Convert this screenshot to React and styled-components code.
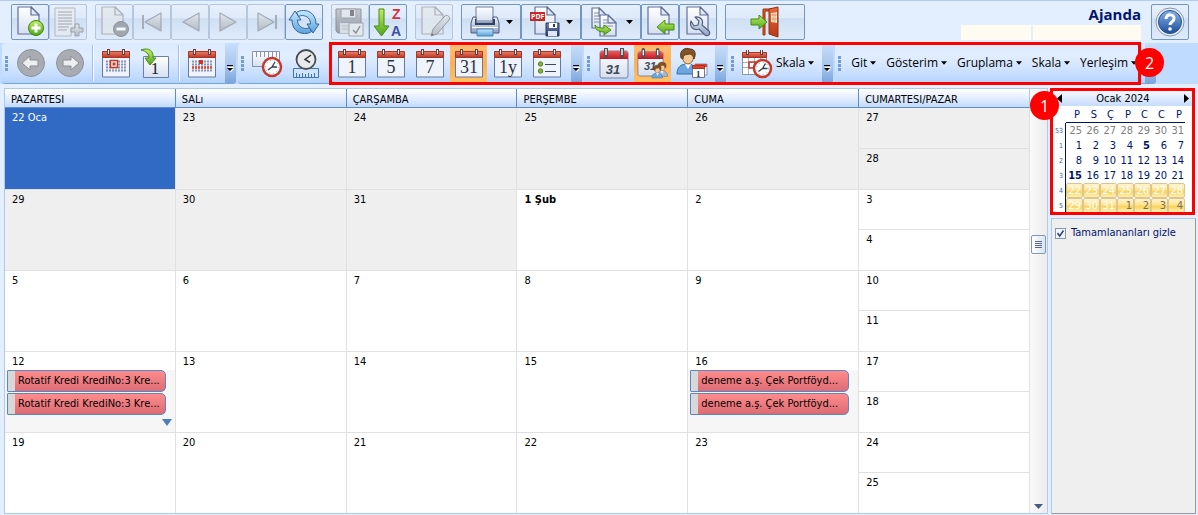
import React from 'react';
import styled, { createGlobalStyle, css } from 'styled-components';

const GlobalStyle = createGlobalStyle`
  * {
    box-sizing: border-box;
  }

  body {
    margin: 0;
    background: #e3eeff;
    font-family: 'DejaVu Sans Condensed', 'Noto Sans', sans-serif;
    font-size: 11px;
    line-height: 14px;
    color: #000;
  }

  button {
    font: inherit;
    color: inherit;
    padding: 0;
    border: none;
    background: none;
  }
`;

const Page = styled.div`
  display: flex;
  flex-direction: column;
  min-height: 100vh;
  border-top: 1px solid #b3cdee;
`;

const MainToolbar = styled.header`
  display: flex;
  align-items: flex-start;
  justify-content: space-between;
  height: 42px;
  padding: 3px 9px 0 11px;
`;

const Groups = styled.div`
  display: flex;
  gap: 8px;
`;

const Group = styled.div`
  display: flex;
`;

const ToolButton = styled.button`
  display: flex;
  align-items: center;
  justify-content: center;
  gap: 5px;
  width: ${({ $wide }) => $wide || 38}px;
  height: 36px;
  border: 1px solid ${({ disabled }) => (disabled ? '#b5c7dd' : '#7496c2')};
  border-radius: 2px;
  background: linear-gradient(#e6effb 0%, #dfeafa 38%, #cfdff3 40%, #deebfb 100%);

  svg {
    flex: none;
  }

  > svg:first-child {
    opacity: ${({ disabled }) => (disabled ? 0.75 : 1)};
  }
`;

const TitleArea = styled.div`
  display: flex;
  gap: 10px;
`;

const TitleBlock = styled.div`
  display: flex;
  flex-direction: column;
  align-items: flex-end;
`;

const Title = styled.h1`
  margin: 0;
  height: 21px;
  font-family: 'Open Sans', sans-serif;
  font-size: 15px;
  font-weight: 700;
  line-height: 21px;
  color: #00146e;
`;

const Fields = styled.div`
  display: flex;
  gap: 2px;
`;

const Field = styled.span`
  width: ${({ $width }) => $width}px;
  height: 15px;
  background: #fffbf0;
`;

const BandBar = styled.nav`
  position: relative;
  display: flex;
  gap: 2px;
  height: 41px;
  padding-left: 2px;
  background: #bfdbff;
`;

const Band = styled.div`
  display: flex;
  align-items: center;
  height: 41px;
  border-bottom: 1px solid #7ba5de;
  border-radius: 3px;
  background: linear-gradient(#dceaff, #e1edff 35%, #c5ddff 80%, #b5d2fb);
  overflow: hidden;
`;

const BandItems = styled.div`
  display: flex;
  align-items: center;
  gap: ${({ $gap }) => $gap || 0}px;
  padding: 0 ${({ $end }) => $end || 0}px 0 ${({ $start }) => $start || 0}px;
`;

const Grip = styled.span`
  width: 3px;
  height: 15px;
  margin-left: 3px;
  background: repeating-linear-gradient(#6f9ddb 0 3px, transparent 3px 4px);
`;

const Cap = styled.button`
  display: flex;
  align-items: flex-end;
  justify-content: center;
  width: 11px;
  height: 41px;
  padding-bottom: 12px;
  background: linear-gradient(#c9dffc, #a3c2ec 60%, #79a3dc);
`;

const IconButton = styled.button`
  display: flex;
  align-items: center;
  justify-content: center;
  width: 37px;
  height: 37px;
  ${({ $active }) =>
    $active &&
    css`
      background: linear-gradient(#fdbd75, #ffb052 50%, #ffc167);
    `}
`;

const Divider = styled.span`
  width: 2px;
  height: 36px;
  border-left: 1px solid #9cbfee;
  border-right: 1px solid #fff;
`;

const MenuButton = styled.button`
  display: flex;
  align-items: center;
  gap: 3px;
  height: 36px;
  font-family: 'Open Sans', sans-serif;
  font-size: 12px;
`;

const Outline = styled.div`
  position: absolute;
  border: 3px solid #f00;
  pointer-events: none;
`;

const ToolbarOutline = styled(Outline)`
  top: -1px;
  left: 329px;
  width: 812px;
  height: 43px;
`;

const PanelOutline = styled(Outline)`
  inset: 0 1px -1px -1px;
`;

const Badge = styled.span`
  position: absolute;
  display: flex;
  align-items: center;
  justify-content: center;
  width: 29px;
  height: 29px;
  border-radius: 50%;
  background: #f00;
  color: #fff;
  font-family: 'Open Sans', sans-serif;
  font-size: 16px;
`;

const ToolbarBadge = styled(Badge)`
  top: 5px;
  left: 1135px;
`;

const PanelBadge = styled(Badge)`
  top: 3px;
  left: -21px;
`;

const Workspace = styled.main`
  display: flex;
  flex: 1;
  gap: 3px;
  padding: 4px 2px 1px 4px;
`;

const Planner = styled.section`
  display: flex;
  flex: 1;
  min-width: 0;
  border: 1px solid #b1c9e8;
  background: #fff;
`;

const MonthTable = styled.table`
  flex: 1;
  min-width: 0;
  width: 100%;
  table-layout: fixed;
  border-collapse: separate;
  border-spacing: 0;
`;

const DayHead = styled.th`
  height: 19px;
  padding: 3px 6px 0;
  border-bottom: 1px solid #5f8bc9;
  border-right: 1px solid #5f8bc9;
  background: linear-gradient(#fff, #e6f0ff 45%, #c2dbff);
  font-weight: 400;
  text-align: left;
  white-space: nowrap;

  &:last-child {
    border-right-color: #b1c9e8;
  }
`;

const tones = {
  other: css`
    background: #efefef;
  `,
  selected: css`
    background: #316ac5;
    color: #fff;
  `,
  busy: css`
    background: linear-gradient(#fff 18px, #f6f6f6 18px);
  `,
};

const DayCell = styled.td`
  height: ${({ $height }) => $height}px;
  padding: 2px 9px 0 2px;
  border-right: 1px solid #e0e0e0;
  border-bottom: ${({ $last }) => ($last ? 0 : '1px solid #e0e0e0')};
  vertical-align: top;
  font-weight: ${({ $bold }) => ($bold ? 700 : 400)};
  ${({ $tone }) => tones[$tone]}
`;

const DayNumber = styled.div`
  padding-left: 5px;
  height: 16px;
  line-height: 16px;
`;

const Event = styled.div`
  height: 22px;
  margin-bottom: 1px;
  padding: 0 3px;
  border: 1px solid #5a86c4;
  border-radius: 1px 5px 5px 1px;
  background: linear-gradient(90deg, #d8d8d8 7px, transparent 7px), linear-gradient(#ff8c8c, #dc6c74);
  line-height: 20px;
  text-indent: 7px;
  white-space: nowrap;
  overflow: hidden;
`;

const MoreButton = styled.button`
  display: flex;
  justify-content: flex-end;
  margin: 4px -6px 0 auto;
  width: 14px;
  height: 8px;
`;

const ScrollBar = styled.div`
  display: flex;
  flex-direction: column;
  align-items: center;
  justify-content: flex-end;
  width: 17px;
  padding-bottom: 4px;
  background: linear-gradient(90deg, #fafafa, #ececec);
`;

const Thumb = styled.span`
  display: flex;
  align-items: center;
  justify-content: center;
  width: 15px;
  height: 19px;
  margin-bottom: auto;
  margin-top: 146px;
  border: 1px solid #7f97b8;
  border-radius: 2px;
  background: linear-gradient(90deg, #fff, #dce4ee);
`;

const Side = styled.aside`
  display: flex;
  flex-direction: column;
  gap: 4px;
  width: 145px;
`;

const DatePanel = styled.section`
  position: relative;
  height: 126px;
  padding: 3px 4px 0 3px;
  background: #fff;
`;

const MonthBar = styled.div`
  display: flex;
  align-items: center;
  justify-content: space-between;
  height: 15px;
  padding: 0 3px;
  background: linear-gradient(#f5f9ff, #c6dcfb);
`;

const NavButton = styled.button`
  display: flex;
`;

const MiniTable = styled.table`
  width: 131px;
  margin-top: 2px;
  border-spacing: 0;
  table-layout: fixed;
  color: #00146e;

  th,
  td {
    height: 15px;
    padding: 1px 1px 0 0;
    font-weight: 400;
    line-height: 14px;
    text-align: right;
  }

  thead th {
    padding-top: 0;
    padding-right: 3px;
    border-bottom: 1px solid #00146e;
  }

  tr > :first-child {
    width: 12px;
    padding-right: 2px;
    border-bottom: 0;
    border-right: 1px solid #00146e;
    font-size: 7px;
    color: #3a5f9d;
  }

  thead tr > :first-child {
    border-right-color: transparent;
  }
`;

const MiniDay = styled.td`
  && {
    font-weight: ${({ $bold }) => ($bold ? 700 : 400)};
    color: ${({ $tone }) => ({ muted: '#808080', picked: '#fff', pickedNext: '#77715c' })[$tone]};
    ${({ $tone }) =>
      $tone &&
      $tone !== 'muted' &&
      css`
        padding-top: 0;
        border: 1px solid #dcc590;
        border-radius: 2px;
        background: linear-gradient(#fff4cf, #ffe695 40%, #f8d35c 60%, #fff0b8);
        line-height: 13px;
      `}
  }
`;

const TaskPanel = styled.section`
  flex: 1;
  padding: 7px 3px;
  border: 1px solid #b1c9e8;
  border-right-color: #9a9a9a;
  border-bottom-color: #9a9a9a;
  background: #efefef;
`;

const CheckLabel = styled.label`
  display: flex;
  align-items: center;
  gap: 5px;
  color: #00146e;
  white-space: nowrap;
`;

const CheckBox = styled.input`
  appearance: none;
  width: 11px;
  height: 11px;
  margin: 0;
  border: 1px solid #8098b8;
  background: #f4f6fa
    url("data:image/svg+xml,%3Csvg xmlns='http://www.w3.org/2000/svg' viewBox='0 0 9 9'%3E%3Cpath d='M1.5 4l2.2 3L7.5 1.5' fill='none' stroke='%2335507f' stroke-width='1.7'/%3E%3C/svg%3E")
    center / 9px 9px no-repeat;
`;

/* Icons */

const Svg = ({ w = 32, h = 32, children }) => (
  <svg width={w} height={h} viewBox={`0 0 ${w} ${h}`} aria-hidden="true">
    {children}
  </svg>
);

const HiddenSvg = styled.svg`
  position: absolute;
`;

const Gradients = () => (
  <HiddenSvg width="0" height="0" aria-hidden="true">
    <defs>
      {[
        ['paper', '#ffffff', '#d5dff0'],
        ['gray', '#e6e8eb', '#a9adb3'],
        ['grayDark', '#b9bcc0', '#85898e'],
        ['green', '#c3ee62', '#4fa51c'],
        ['red', '#ee8066', '#bb3524'],
        ['crimson', '#ef5a5a', '#c01722'],
        ['blue', '#c6e8fb', '#5aa3dc'],
        ['deep', '#86b2e8', '#1c4d9c'],
        ['navy', '#7484b4', '#28386f'],
        ['orange', '#e8683c', '#b93a18'],
        ['steel', '#f1f5fb', '#8e9fc0'],
      ].map(([id, from, to]) => (
        <linearGradient key={id} id={id} x1="0" y1="0" x2="0" y2="1">
          <stop offset="0" stopColor={from} />
          <stop offset="1" stopColor={to} />
        </linearGradient>
      ))}
    </defs>
  </HiddenSvg>
);

const Caret = ({ w = 7 }) => (
  <svg width={w} height="4" viewBox="0 0 7 4" aria-hidden="true">
    <path d="M0 0h7L3.5 4z" fill="#000" />
  </svg>
);

const Sheet = ({ x = 4, y = 1, w = 21, h = 27, gray }) => (
  <g
    fill={gray ? '#e4e7ec' : 'url(#paper)'}
    stroke={gray ? '#9a9fa7' : '#5f719b'}
    strokeWidth="1.2"
    strokeLinejoin="round"
  >
    <path d={`M${x} ${y}h${w - 8}l8 8v${h - 8}h-${w}z`} />
    <path d={`M${x + w - 8} ${y}v8h8z`} />
  </g>
);

const NewIcon = () => (
  <Svg>
    <Sheet />
    <circle cx="22" cy="22" r="7.5" fill="url(#green)" stroke="#3c8511" />
    <path d="M22 17.5v9M17.5 22h9" stroke="#fff" strokeWidth="3" />
  </Svg>
);

const AddLinesIcon = () => (
  <Svg>
    <path d="M3 2h20v20h-4v8H3z" fill="#e8ebef" stroke="#a5aab2" />
    <path d="M6 6h14M6 9h14M6 12h14M6 15h14M6 18h14M6 21h11M6 24h9" stroke="#8f949b" />
    <path d="M23 18h4v4h4v4h-4v4h-4v-4h-4v-4h4z" fill="url(#gray)" stroke="#858a91" />
  </Svg>
);

const DeleteIcon = () => (
  <Svg>
    <Sheet gray />
    <circle cx="23" cy="23" r="7.5" fill="#8e9196" stroke="#75787d" />
    <path d="M18.5 23h9" stroke="#fff" strokeWidth="3" />
  </Svg>
);

const NavIcon = ({ back, bar }) => {
  const tri = back ? 'M25 7v18L9 16z' : 'M8 7v18l16-9z';
  return (
    <Svg>
      <path d={tri} fill="url(#gray)" stroke="#8f959e" strokeWidth="1.2" strokeLinejoin="round" />
      {bar && <path d={back ? 'M7 9v14' : 'M26 9v14'} stroke="#969ca5" strokeWidth="2" />}
    </Svg>
  );
};

const RefreshIcon = () => (
  <Svg>
    <g fill="url(#blue)" stroke="#33669f" strokeLinejoin="round">
      <path d="M7 5 13 14H9.5c0 5 3 8 8 8.500 1.500 0 3-.5 4-1l2 4c-2 1.500-4 2-7 2C9 27.500 4 22 4 14H1z" />
      <path d="M25 27 19 18h3.500c0-5-3-8-8-8.500-1.500 0-3 .5-4 1l-2-4c2-1.500 4-2 7-2C23 4.500 28 10 28 18h3z" />
    </g>
  </Svg>
);

const SaveIcon = () => (
  <Svg>
    <path d="M2 3h25v24H4l-2-2z" fill="url(#grayDark)" stroke="#777b80" />
    <path d="M7 3h15v9H7z" fill="#e3e5e8" stroke="#8a8d92" />
    <path d="M16 4h4v6h-4z" fill="#5f6368" />
    <path d="M6 17h17v10H6z" fill="#d8dadd" />
    <path d="M8 20h10M8 23h8" stroke="#aeb1b6" />
    <path d="M15 17h14v13H15z" fill="#e9ebee" stroke="#8c9096" />
    <path d="m19 24 3 3 4-7" fill="none" stroke="#777" strokeWidth="1.5" />
  </Svg>
);

const SortIcon = () => (
  <Svg>
    <path d="M7 3h5v17h5l-7.500 10L2 20h5z" fill="url(#green)" stroke="#478b17" strokeLinejoin="round" />
    <g fontFamily="Liberation Sans, sans-serif" fontWeight="700" fontSize="14">
      <text x="20" y="13" fill="#d3313c">Z</text>
      <text x="19" y="30" fill="#3c51a0">A</text>
    </g>
  </Svg>
);

const EditIcon = () => (
  <Svg>
    <Sheet x={4} gray />
    <path d="m13 30 2-7 12-13c2-2 6 1 4 4L19 28z" fill="url(#gray)" stroke="#7e838a" strokeLinejoin="round" />
    <path d="m13 30 1-3 2 2z" fill="#555" />
  </Svg>
);

const PrintIcon = () => (
  <Svg>
    <path d="M7 1h17v14H7z" fill="url(#paper)" stroke="#6d7c9f" />
    <path d="M4 11h3v6h17v-6h4l2 6v10H2V17z" fill="url(#steel)" stroke="#4c5c85" strokeLinejoin="round" />
    <path d="M6 13h1v4h17v-4h2v6H6z" fill="#334165" />
    <path d="M3 21.500h26" stroke="#fff" />
    <path d="M8 23h16v7H8z" fill="url(#blue)" stroke="#4d83b9" />
  </Svg>
);

const PdfIcon = () => (
  <Svg>
    <Sheet x={6} w={20} />
    <path d="M1 6h15v9H1z" fill="#c82629" />
    <text x="2" y="13" fill="#fff" fontFamily="Open Sans, sans-serif" fontWeight="700" fontSize="7">PDF</text>
    <path d="M17 17h13v13H17z" fill="url(#navy)" stroke="#273764" />
    <path d="M20 17h8v5h-8z" fill="#fff" />
    <path d="M19 25h9v5h-9z" fill="#dfe7f6" />
    <path d="M24 18h2v3h-2z" fill="#273764" />
  </Svg>
);

const CopyIcon = () => (
  <Svg>
    <Sheet x={3} y={2} w={15} h={20} />
    <path d="M5 7h5M5 10h8M5 13h8M5 16h8" stroke="#8190b3" />
    <Sheet x={11} y={9} w={16} h={21} />
    <path d="M14 14h5M14 17h10M14 20h10" stroke="#8190b3" />
    <path d="M6 19c2 3 5 3 9 3v-3l7 5-7 5v-3c-6 0-9-3-9-7z" fill="url(#green)" stroke="#478b17" strokeLinejoin="round" />
  </Svg>
);

const ImportIcon = () => (
  <Svg>
    <Sheet x={4} w={21} />
    <path d="m13 21 8-7v4h9v6h-9v4z" fill="url(#green)" stroke="#478b17" strokeLinejoin="round" />
  </Svg>
);

const ToolsIcon = () => (
  <Svg>
    <Sheet x={5} w={21} />
    <path
      d="M9 15c-2 6 3 10 8 8l6 6c3 2 6-1 4-4l-7-6c2-5-2-9-7-8l4 4-1 4-4 1z"
      fill="url(#steel)"
      stroke="#506084"
      strokeWidth="1.2"
      strokeLinejoin="round"
    />
  </Svg>
);

const DoorIcon = () => (
  <Svg>
    <path d="M14 3v26h2V5h6V3z" fill="#d9552a" stroke="#a03413" />
    <path d="m20 3 9-2v30l-9-3z" fill="url(#orange)" stroke="#94300f" strokeLinejoin="round" />
    <path d="m22 7 6-1v11l-6-1z" fill="#fff2cf" />
    <path d="M24 6v11M26 6v11M22 9h6M22 13h6" stroke="#cf6a3a" strokeWidth="0.6" />
    <path d="M2 13h8V9l8 7-8 7v-4H2z" fill="url(#green)" stroke="#478b17" strokeLinejoin="round" />
  </Svg>
);

const HelpIcon = () => (
  <Svg>
    <circle cx="16" cy="16" r="14" fill="#e9eef7" stroke="#8495b3" />
    <circle cx="16" cy="16" r="11.5" fill="url(#deep)" stroke="#27528f" />
    <path d="M12 13c0-6 9-5 8 0-.5 3-4 3-4 6" fill="none" stroke="#fff" strokeWidth="3" />
    <circle cx="16" cy="23" r="1.8" fill="#fff" />
  </Svg>
);

const ArrowCircle = ({ back }) => (
  <Svg w={30} h={30}>
    <circle cx="15" cy="15" r="13.5" fill="#a9adb3" stroke="#8d9299" />
    <path
      d={back ? 'm6 15 8-7v4h8v6h-8v4z' : 'm24 15-8-7v4H8v6h8v4z'}
      fill="#eceef0"
      stroke="#878c93"
      strokeLinejoin="round"
    />
  </Svg>
);

const CalendarBase = () => (
  <g>
    <path d="M1.5 4h27v25h-27z" fill="#eff3fb" stroke="#67799f" />
    <path d="M1.5 3.5h27v6h-27z" fill="url(#red)" stroke="#a93625" />
    <path d="M7.500 1v6M22.500 1v6" stroke="#653d3d" strokeWidth="3" />
    <path d="M7.500 2v4M22.500 2v4" stroke="#f6eaea" />
  </g>
);

const NumberCalendar = ({ label }) => (
  <Svg w={30} h={31}>
    <CalendarBase />
    <text x="15" y="25" textAnchor="middle" fill="#2c3340" fontFamily="Liberation Serif, serif" fontSize="18">
      {label}
    </text>
  </Svg>
);

const RedCalendarBase = () => (
  <g>
    <rect x="1" y="3" width="28" height="27" rx="2" fill="url(#paper)" stroke="#7a8193" />
    <path d="M1 11V5l2-2h24l2 2v6z" fill="url(#crimson)" />
    <path d="M7 1v7M23 1v7" stroke="#55504f" strokeWidth="4" strokeLinecap="round" />
    <path d="M7 1v6M23 1v6" stroke="#f3f3f3" strokeWidth="1.5" />
  </g>
);

const DateCalendar = () => (
  <Svg w={30} h={31}>
    <RedCalendarBase />
    <text
      x="14"
      y="26"
      textAnchor="middle"
      fill="#444a55"
      fontFamily="Liberation Sans, sans-serif"
      fontSize="13"
      fontWeight="700"
      fontStyle="italic"
    >
      31
    </text>
  </Svg>
);

const ListCalendar = () => (
  <Svg w={30} h={31}>
    <CalendarBase />
    <circle cx="8.5" cy="16" r="2.2" fill="#84b83a" stroke="#587f22" />
    <circle cx="8.5" cy="23" r="2.2" fill="#84b83a" stroke="#587f22" />
    <path d="M13 16.500h11M13 23.500h11" stroke="#414959" />
  </Svg>
);

const GridCalendar = ({ week }) => (
  <Svg w={30} h={31}>
    <CalendarBase />
    <path d="M5 13.500h20M5 16.500h20M5 19.500h20M5 22.500h20" stroke="#8594b6" strokeWidth="2" strokeDasharray="2 1" />
    {week ? (
      <g>
        <path d="M5 19.500h20" stroke="#e04b32" strokeWidth="2.5" strokeDasharray="2 1" />
        <path d="M12 12h4v4h-4z" fill="#d23322" />
      </g>
    ) : (
      <g>
        <path d="M9.500 12.500h7v7h-7z" fill="#fff" stroke="#d23322" strokeWidth="1.5" />
        <path d="M11.500 14.500h3v3h-3z" fill="#d23322" />
      </g>
    )}
  </Svg>
);

const GotoIcon = () => (
  <Svg w={30} h={31}>
    <path d="M3.500 8.500h25v21h-25z" fill="url(#paper)" stroke="#6b7ea8" />
    <text x="15" y="26" textAnchor="middle" fontFamily="Liberation Serif, serif" fontSize="17" fill="#222">1</text>
    <path d="M1 2c8-3 13 1 12 8h3l-6 7-5-7h4c0-4-3-7-8-8z" fill="url(#green)" stroke="#478b17" strokeLinejoin="round" />
  </Svg>
);

const Clock = ({ cx, cy, r, color = '#c6382b' }) => (
  <g>
    <circle cx={cx} cy={cy} r={r} fill="#fff" stroke={color} strokeWidth="2.5" />
    <circle cx={cx} cy={cy} r={r - 2.5} fill="none" stroke="#8b98ae" strokeDasharray="1 3" />
    <path d={`M${cx - 4} ${cy + 3}l4-3 3-5M${cx} ${cy}h5`} fill="none" stroke="#333c50" strokeWidth="1.3" />
  </g>
);

const RulerClock = () => (
  <Svg w={32} h={31}>
    <path d="M1.500 3.500h27v15h-27z" fill="url(#paper)" stroke="#8793ad" />
    <path d="M5.500 4v5M9.500 4v5M13.500 4v5M17.500 4v5M21.500 4v5M25.500 4v5" stroke="#8793ad" />
    <Clock cx={21} cy={19} r={9} />
  </Svg>
);

const ClockRuler = () => (
  <Svg w={30} h={31}>
    <path d="M2.500 20.500h25v9h-25z" fill="#cfe3fb" stroke="#4173b7" />
    <path d="M5.500 29v-4M8.500 29v-3M11.500 29v-4M14.500 29v-3M17.500 29v-4M20.500 29v-3M23.500 29v-4" stroke="#4173b7" />
    <circle cx="15" cy="11.5" r="9.5" fill="#e8eaed" stroke="#4a4d52" strokeWidth="1.8" />
    <path d="m20 7-6 4.500 5 3" fill="none" stroke="#333" strokeWidth="1.5" />
  </Svg>
);

const CalendarClock = () => (
  <Svg w={32} h={31}>
    <path d="M1.500 4.500h24v22h-24z" fill="#fff" stroke="#8d95ab" />
    <path d="M2 14.500h23M2 19.500h23M7.500 10v16M13.500 10v16M19.500 10v16" stroke="#a8b0c4" />
    <path d="M1.500 4.500h24v5h-24z" fill="url(#red)" stroke="#a93625" />
    <path d="M6.500 2v5M20.500 2v5" stroke="#653d3d" strokeWidth="3" />
    <path d="M6.500 2v4M20.500 2v4" stroke="#f6eaea" />
    <path d="M8 14h6v6H8z" fill="none" stroke="#d23322" strokeWidth="1.5" />
    <Clock cx={21.5} cy={20.5} r={8.5} />
  </Svg>
);

const Person = ({ x, y, s, shirt = '#6da7e0' }) => (
  <g transform={`translate(${x} ${y}) scale(${s})`}>
    <path d="M0 26c0-7 4-10 10-10s11 3 11 10z" fill={shirt} stroke="#396ca9" />
    <path d="m8 16 3 5 3-5z" fill="#fff" />
    <ellipse cx="11" cy="9" rx="5.5" ry="7" fill="#f3c997" stroke="#96632e" />
    <path d="M4 10C2 2 8-1 13 1c6 0 6 6 4 10-1-4-3-5-5-5-3 1-6 0-6 5z" fill="#80532a" stroke="#5d3917" />
  </g>
);

const PeopleCalendar = () => (
  <Svg w={32} h={31}>
    <g transform="translate(0 1) scale(0.9)">
      <RedCalendarBase />
    </g>
    <text x="13" y="22" textAnchor="middle" fontFamily="Liberation Sans, sans-serif" fontSize="11" fontWeight="700" fontStyle="italic" fill="#454b57">31</text>
    <Person x={19} y={14} s={0.55} shirt="#a5bddb" />
    <Person x={15} y={17} s={0.5} />
  </Svg>
);

const PersonCalendar = () => (
  <Svg w={32} h={32}>
    <Person x={1} y={1} s={1} />
    <path d="M19 17h12v11H19z" fill="#fff" stroke="#8d95ab" />
    <path d="M19 17h12v3H19z" fill="#d94434" />
    <path d="M16.500 19.500h12v11h-12z" fill="#fff" stroke="#737b91" />
    <path d="M16.500 18.500h12v3h-12z" fill="#d94434" stroke="#a93625" />
    <text x="20" y="30" fontFamily="Liberation Serif, serif" fontSize="9" fontWeight="700" fill="#333">1</text>
  </Svg>
);

const CapIcon = () => (
  <svg width="7" height="7" viewBox="0 0 7 7" aria-hidden="true">
    <path d="M1 2h6v1H1zM1 4h6L4 7z" fill="#fff" />
    <path d="M0 0h6v1H0zM0 3h6L3 6z" fill="#000" />
  </svg>
);

/* Data */

const toolGroups = [
  [
    { name: 'Yeni', icon: <NewIcon /> },
    { name: 'Satır ekle', icon: <AddLinesIcon />, disabled: true },
  ],
  [
    { name: 'Sil', icon: <DeleteIcon />, disabled: true },
    { name: 'İlk', icon: <NavIcon back bar />, disabled: true },
    { name: 'Önceki', icon: <NavIcon back />, disabled: true },
    { name: 'Sonraki', icon: <NavIcon />, disabled: true },
    { name: 'Son', icon: <NavIcon bar />, disabled: true },
    { name: 'Yenile', icon: <RefreshIcon /> },
  ],
  [
    { name: 'Kaydet', icon: <SaveIcon />, disabled: true },
    { name: 'Sırala', icon: <SortIcon /> },
  ],
  [{ name: 'Düzenle', icon: <EditIcon />, disabled: true }],
  [
    { name: 'Yazdır', icon: <PrintIcon />, wide: 60, menu: true },
    { name: 'PDF', icon: <PdfIcon />, wide: 60, menu: true },
    { name: 'Kopyala', icon: <CopyIcon />, wide: 60, menu: true },
    { name: 'İçeri al', icon: <ImportIcon /> },
    { name: 'Ayarlar', icon: <ToolsIcon /> },
  ],
  [{ name: 'Çıkış', icon: <DoorIcon />, wide: 80 }],
];

const menus = ['Git', 'Gösterim', 'Gruplama', 'Skala', 'Yerleşim'];

const dayNames = ['PAZARTESI', 'SALı', 'ÇARŞAMBA', 'PERŞEMBE', 'CUMA', 'CUMARTESI/PAZAR'];

const loan = 'Rotatif Kredi KrediNo:3 Kre...';
const cheque = 'deneme a.ş. Çek Portföyd...';

const weeks = [
  { days: ['22 Oca', '23', '24', '25', '26'], weekend: ['27', '28'], other: 7, heights: [41, 41] },
  { days: ['29', '30', '31', '1 Şub', '2'], weekend: ['3', '4'], other: 3, heights: [40, 41] },
  { days: ['5', '6', '7', '8', '9'], weekend: ['10', '11'], other: 0, heights: [40, 41] },
  { days: ['12', '13', '14', '15', '16'], weekend: ['17', '18'], other: 0, heights: [40, 41] },
  { days: ['19', '20', '21', '22', '23'], weekend: ['24', '25'], other: 0, heights: [40, 40], last: true },
];

const events = {
  '3-0': { items: [loan, loan], more: true },
  '3-4': { items: [cheque, cheque] },
};

const miniWeeks = [
  ['53', [25, 26, 27, 28, 29, 30, 31]],
  ['1', [1, 2, 3, 4, 5, 6, 7]],
  ['2', [8, 9, 10, 11, 12, 13, 14]],
  ['3', [15, 16, 17, 18, 19, 20, 21]],
  ['4', [22, 23, 24, 25, 26, 27, 28]],
  ['5', [29, 30, 31, 1, 2, 3, 4]],
];

const miniTone = (row, day) => {
  if (row === 0) return 'muted';
  if (row < 4) return undefined;
  return row === 5 && day < 10 ? 'pickedNext' : 'picked';
};

const cellTone = (week, index, other) => {
  if (week === 0 && index === 0) return 'selected';
  if (events[`${week}-${index}`]) return 'busy';
  return index < other ? 'other' : undefined;
};

const BandCap = () => (
  <Cap aria-label="Diğer düğmeler">
    <CapIcon />
  </Cap>
);

const BandButton = ({ name, active, children }) => (
  <IconButton aria-label={name} $active={active}>
    {children}
  </IconButton>
);

const ViewBands = () => (
  <BandBar>
    <Band>
      <Grip />
      <BandItems $start={4} $gap={2}>
        <BandButton name="Geri"><ArrowCircle back /></BandButton>
        <BandButton name="İleri"><ArrowCircle /></BandButton>
      </BandItems>
      <BandItems $start={4} $end={5}>
        <Divider />
        <BandItems $start={3} $gap={2} $end={5}>
          <BandButton name="Bugün"><GridCalendar /></BandButton>
          <BandButton name="Tarihe git"><GotoIcon /></BandButton>
        </BandItems>
        <Divider />
        <BandItems $start={3}>
          <BandButton name="Hafta"><GridCalendar week /></BandButton>
        </BandItems>
      </BandItems>
      <BandCap />
    </Band>
    <Band>
      <Grip />
      <BandItems $start={4} $gap={2} $end={6}>
        <BandButton name="Zaman cetveli"><RulerClock /></BandButton>
        <BandButton name="Saat cetveli"><ClockRuler /></BandButton>
        <BandItems $start={7} $gap={2}>
          <BandButton name="Gün"><NumberCalendar label="1" /></BandButton>
          <BandButton name="İş haftası"><NumberCalendar label="5" /></BandButton>
          <BandButton name="Yedi gün"><NumberCalendar label="7" /></BandButton>
          <BandButton name="Ay" active><NumberCalendar label="31" /></BandButton>
          <BandButton name="Yıl"><NumberCalendar label="1y" /></BandButton>
          <BandButton name="Liste"><ListCalendar /></BandButton>
        </BandItems>
      </BandItems>
      <BandCap />
    </Band>
    <Band>
      <Grip />
      <BandItems $start={5} $gap={2} $end={5}>
        <BandButton name="Tek takvim"><DateCalendar /></BandButton>
        <BandButton name="Kişiler" active><PeopleCalendar /></BandButton>
        <BandButton name="Kişi"><PersonCalendar /></BandButton>
      </BandItems>
      <BandCap />
    </Band>
    <Band>
      <Grip />
      <BandItems $start={7} $end={8}>
        <MenuButton>
          <CalendarClock />
          Skala
          <Caret w={6} />
        </MenuButton>
      </BandItems>
      <BandCap />
    </Band>
    <Band>
      <Grip />
      <BandItems $start={10} $gap={10} $end={8}>
        {menus.map((menu) => (
          <MenuButton key={menu}>
            {menu}
            <Caret w={6} />
          </MenuButton>
        ))}
      </BandItems>
      <BandCap />
    </Band>
    <ToolbarOutline />
    <ToolbarBadge>2</ToolbarBadge>
  </BandBar>
);

const MonthView = () => (
  <Planner>
    <MonthTable>
      <thead>
        <tr>
          {dayNames.map((name) => (
            <DayHead key={name}>{name}</DayHead>
          ))}
        </tr>
      </thead>
      <tbody>
        {weeks.map(({ days, weekend, other, heights, last }, week) => (
          <React.Fragment key={days[0]}>
            <tr>
              {days.map((day, index) => {
                const entry = events[`${week}-${index}`];
                return (
                  <DayCell
                    key={day}
                    rowSpan={2}
                    $height={heights[0] + heights[1]}
                    $tone={cellTone(week, index, other)}
                    $bold={day === '1 Şub'}
                    $last={last}
                  >
                    <DayNumber>{day}</DayNumber>
                    {entry?.items.map((item, i) => <Event key={i}>{item}</Event>)}
                    {entry?.more && (
                      <MoreButton aria-label="Daha fazla">
                        <svg width="10" height="7" viewBox="0 0 10 7" aria-hidden="true">
                          <path d="M0 0h10L5 7z" fill="#4c7fbd" />
                        </svg>
                      </MoreButton>
                    )}
                  </DayCell>
                );
              })}
              <DayCell $height={heights[0]} $tone={other > 5 ? 'other' : undefined}>
                <DayNumber>{weekend[0]}</DayNumber>
              </DayCell>
            </tr>
            <tr>
              <DayCell $height={heights[1]} $tone={other > 5 ? 'other' : undefined} $last={last}>
                <DayNumber>{weekend[1]}</DayNumber>
              </DayCell>
            </tr>
          </React.Fragment>
        ))}
      </tbody>
    </MonthTable>
    <ScrollBar>
      <Thumb>
        <svg width="7" height="8" viewBox="0 0 7 8" aria-hidden="true">
          <path d="M0 .5h7M0 2.500h7M0 4.500h7M0 6.500h7" stroke="#56698c" />
        </svg>
      </Thumb>
      <svg width="9" height="5" viewBox="0 0 9 5" aria-hidden="true">
        <path d="M0 0h9L4.500 5z" fill="#465a86" />
      </svg>
    </ScrollBar>
  </Planner>
);

const DateNavigator = () => (
  <DatePanel>
    <MonthBar>
      <NavButton aria-label="Önceki ay">
        <svg width="5" height="9" viewBox="0 0 5 9" aria-hidden="true">
          <path d="M5 0v9L0 4.500z" />
        </svg>
      </NavButton>
      Ocak 2024
      <NavButton aria-label="Sonraki ay">
        <svg width="5" height="9" viewBox="0 0 5 9" aria-hidden="true">
          <path d="M0 0v9l5-4.500z" />
        </svg>
      </NavButton>
    </MonthBar>
    <MiniTable>
      <thead>
        <tr>
          <th />
          {['P', 'S', 'Ç', 'P', 'C', 'C', 'P'].map((letter, i) => (
            <th key={i}>{letter}</th>
          ))}
        </tr>
      </thead>
      <tbody>
        {miniWeeks.map(([number, days], row) => (
          <tr key={number}>
            <th>{number}</th>
            {days.map((day) => (
              <MiniDay key={day} $tone={miniTone(row, day)} $bold={(row === 1 && day === 5) || (row === 3 && day === 15)}>
                {day}
              </MiniDay>
            ))}
          </tr>
        ))}
      </tbody>
    </MiniTable>
    <PanelOutline />
    <PanelBadge>1</PanelBadge>
  </DatePanel>
);

const App = () => (
  <Page>
    <GlobalStyle />
    <Gradients />
    <MainToolbar>
      <Groups>
        {toolGroups.map((group, i) => (
          <Group key={i}>
            {group.map(({ name, icon, disabled, wide, menu }) => (
              <ToolButton key={name} aria-label={name} disabled={disabled} $wide={wide}>
                {icon}
                {menu && <Caret />}
              </ToolButton>
            ))}
          </Group>
        ))}
      </Groups>
      <TitleArea>
        <TitleBlock>
          <Title>Ajanda</Title>
          <Fields>
            <Field $width={70} />
            <Field $width={108} />
          </Fields>
        </TitleBlock>
        <ToolButton aria-label="Yardım">
          <HelpIcon />
        </ToolButton>
      </TitleArea>
    </MainToolbar>
    <ViewBands />
    <Workspace>
      <MonthView />
      <Side>
        <DateNavigator />
        <TaskPanel>
          <CheckLabel>
            <CheckBox type="checkbox" defaultChecked />
            Tamamlananları gizle
          </CheckLabel>
        </TaskPanel>
      </Side>
    </Workspace>
  </Page>
);

export default App;
